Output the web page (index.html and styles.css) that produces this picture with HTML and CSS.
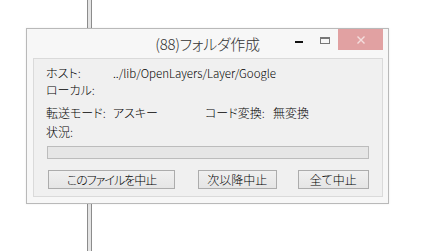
FILE: index.html
```html
<!DOCTYPE html>
<html lang="ja">
<head>
<meta charset="utf-8">
<link rel="stylesheet" href="styles.css">
</head>
<body>
<div class="stage">
  <div class="rail"></div>
  <div class="window">
    <div class="titlebar">
      <div class="title">(88)フォルダ作成</div>
      <div class="controls">
        <span class="ctl ctl-min"><span class="min-bar"></span></span>
        <span class="ctl ctl-max"><span class="max-box"></span></span>
        <span class="ctl ctl-close">
          <svg width="10" height="10" viewBox="0 0 10 10"><path d="M1.5 1.5 L8.5 8.5 M8.5 1.5 L1.5 8.5" stroke="#f4dede" stroke-width="1.4" fill="none"/></svg>
        </span>
      </div>
    </div>
    <div class="panel">
      <div class="row r1">
        <span class="lbl">ホスト:</span>
        <span class="val val-path">../lib/OpenLayers/Layer/Google</span>
      </div>
      <div class="row r2">
        <span class="lbl">ローカル:</span>
      </div>
      <div class="row r3">
        <span class="lbl">転送モード:</span>
        <span class="val val-short">アスキー</span>
        <span class="lbl2">コード変換:</span>
        <span class="val">無変換</span>
      </div>
      <div class="row r4">
        <span class="lbl">状況:</span>
      </div>
      <div class="progress"></div>
      <div class="buttons">
        <button class="btn btn-file">このファイルを中止</button>
        <button class="btn btn-next">次以降中止</button>
        <button class="btn btn-all">全て中止</button>
      </div>
    </div>
  </div>
</div>
</body>
</html>
```

FILE: styles.css
```css
* { box-sizing: border-box; }
html, body {
  margin: 0;
  padding: 0;
  background: #ffffff;
  width: 423px;
  height: 251px;
  overflow: hidden;
}
body {
  font-family: "Noto Sans CJK JP", "Noto Sans", sans-serif;
  font-weight: 300;
  font-feature-settings: "palt";
  color: #000;
}
.stage {
  position: relative;
  width: 423px;
  height: 251px;
  padding: 28px 0 0 26px;
}
.rail {
  position: absolute;
  left: 87px;
  top: 0;
  width: 5px;
  height: 251px;
  border-left: 1px solid #8c8c8c;
  border-right: 1px solid #8c8c8c;
  background: #e4e4e4;
}
.window {
  position: relative;
  width: 363px;
  height: 176px;
  background: #f7f7f7;
  border: 1px solid #b9b9b9;
  box-shadow: 0 0 2px rgba(0,0,0,0.08);
  padding: 0 5px 6px 6px;
  display: flex;
  flex-direction: column;
}
.titlebar {
  height: 29px;
  display: flex;
  align-items: flex-start;
  position: relative;
}
.title {
  position: absolute;
  left: -6px;
  right: -5px;
  top: 5px;
  text-align: center;
  font-size: 15px;
  line-height: 20px;
  color: #333;
  letter-spacing: -0.3px;
}
.controls {
  margin-left: auto;
  display: flex;
  height: 21px;
  position: relative;
}
.ctl {
  display: flex;
  align-items: center;
  justify-content: center;
  height: 21px;
}
.ctl-min { width: 26px; }
.min-bar {
  display: block;
  width: 8px;
  height: 2px;
  background: #111;
  margin-top: 4px;
}
.ctl-max { width: 26px; }
.max-box {
  display: block;
  width: 10px;
  height: 7px;
  border: 1px solid #777;
  border-top-width: 2px;
  margin-top: 2px;
}
.ctl-close {
  width: 45px;
  background: #e1a1a2;
}
.panel {
  flex: 1;
  background: #f0f0f0;
  border: 1px solid #dadada;
  padding: 6px 13px 0 12px;
  font-size: 12px;
  line-height: 16px;
}
.row {
  display: flex;
  height: 16px;
  white-space: nowrap;
}
.r2 { margin-top: 1px; }
.r3 { margin-top: 7px; }
.r4 { margin-top: 3px; }
.lbl { width: 67px; }
.val-path { font-size: 11.5px; }
.val-short { width: 92px; }
.lbl2 { width: 68px; }
.progress {
  margin-top: 6px;
  margin-left: 1px;
  height: 13px;
  background: #e6e6e6;
  border: 1px solid #bcbcbc;
}
.buttons {
  display: flex;
  margin-top: 11px;
  padding-left: 2px;
}
.btn {
  font-family: inherit;
  font-weight: 300;
  font-feature-settings: "palt";
  font-size: 12px;
  line-height: 17px;
  height: 19px;
  padding: 0;
  color: #000;
  background: linear-gradient(#f0f0f0, #e5e5e5);
  border: 1px solid #acacac;
  border-radius: 0;
}
.btn-file { width: 128px; letter-spacing: -1px; }
.btn-next { width: 79px; margin-left: 23px; }
.btn-all { width: 72px; margin-left: 21px; }
```
